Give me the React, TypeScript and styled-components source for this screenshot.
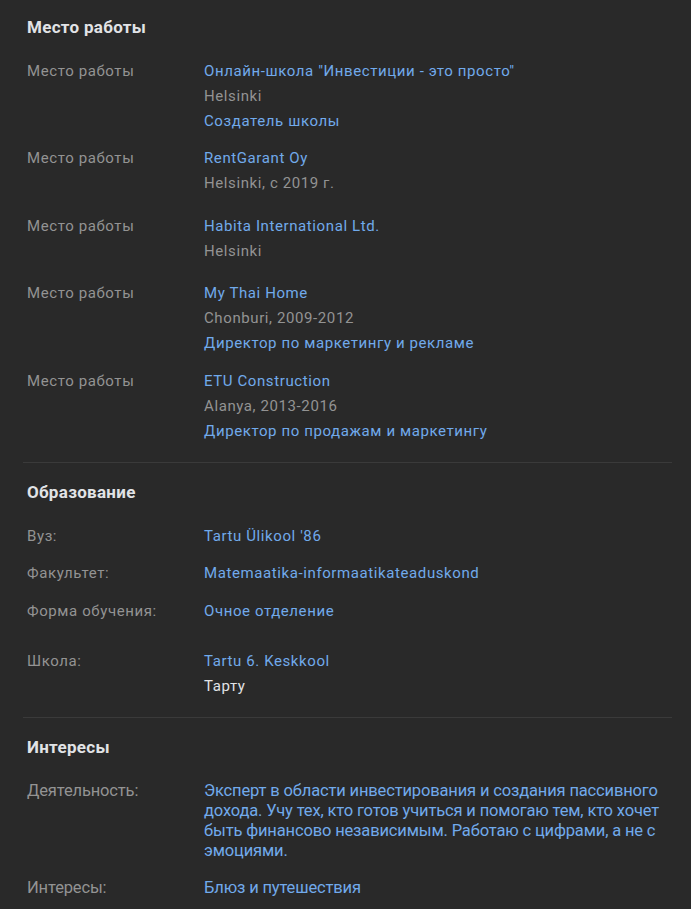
import React from "react";
import styled, { createGlobalStyle } from "styled-components";

const Global = createGlobalStyle`
  html, body { margin: 0; padding: 0; background: #292929; }
  body { font-family: Roboto, "Noto Sans", Arial, sans-serif; -webkit-font-smoothing: antialiased; }
`;

const Page = styled.div`
  background: #292929;
  padding: 0 19px 0 23px;
  min-height: 909px;
  box-sizing: border-box;
`;

const Section = styled.section<{ $top: number; $bottom: number }>`
  padding: ${(p) => p.$top}px 0 ${(p) => p.$bottom}px 4px;
  & + & { border-top: 1px solid #3a3a3a; }
`;

const Heading = styled.h2<{ $gap: number }>`
  margin: 0 0 ${(p) => p.$gap}px;
  font-size: 17px;
  line-height: 20px;
  font-weight: 700;
  color: #e1e3e6;
  letter-spacing: 0.3px;
`;

const Row = styled.div<{ $mb: number; $lh: number; $condensed?: boolean }>`
  display: grid;
  grid-template-columns: 177px 1fr;
  margin-bottom: ${(p) => p.$mb}px;
  font-size: ${(p) => (p.$condensed ? "16.5px" : "15px")};
  line-height: ${(p) => p.$lh}px;
  letter-spacing: ${(p) => (p.$condensed ? "-0.15px" : "0.6px")};
  &:last-child { margin-bottom: 0; }
`;

const Label = styled.div`
  color: #939393;
`;

const Values = styled.div`
  display: flex;
  flex-direction: column;
`;

const Link = styled.a`
  color: #71aaeb;
  text-decoration: none;
`;

const Plain = styled.span<{ $light?: boolean }>`
  color: ${(p) => (p.$light ? "#e1e3e6" : "#939393")};
`;

type Item = { link: string; sub?: string; sub2?: string };

const jobs: { item: Item; mb: number }[] = [
  { item: { link: 'Онлайн-школа "Инвестиции - это просто"', sub: "Helsinki", sub2: "Создатель школы" }, mb: 12 },
  { item: { link: "RentGarant Oy", sub: "Helsinki, с 2019 г." }, mb: 18 },
  { item: { link: "Habita International Ltd.", sub: "Helsinki" }, mb: 17 },
  { item: { link: "My Thai Home", sub: "Chonburi, 2009-2012", sub2: "Директор по маркетингу и рекламе" }, mb: 13 },
  { item: { link: "ETU Construction", sub: "Alanya, 2013-2016", sub2: "Директор по продажам и маркетингу" }, mb: 0 },
];

export default function App() {
  return (
    <>
      <Global />
      <Page>
        <Section $top={17} $bottom={18}>
          <Heading $gap={22}>Место работы</Heading>
          {jobs.map((j, i) => (
            <Row key={i} $mb={j.mb} $lh={25}>
              <Label>Место работы</Label>
              <Values>
                <Link href="#">{j.item.link}</Link>
                {j.item.sub && <Plain>{j.item.sub}</Plain>}
                {j.item.sub2 && <Link href="#">{j.item.sub2}</Link>}
              </Values>
            </Row>
          ))}
        </Section>
        <Section $top={19} $bottom={18}>
          <Heading $gap={22}>Образование</Heading>
          <Row $mb={12} $lh={25}>
            <Label>Вуз:</Label>
            <Values><Link href="#">Tartu Ülikool '86</Link></Values>
          </Row>
          <Row $mb={13} $lh={25}>
            <Label>Факультет:</Label>
            <Values><Link href="#">Matemaatika-informaatikateaduskond</Link></Values>
          </Row>
          <Row $mb={25} $lh={25}>
            <Label>Форма обучения:</Label>
            <Values><Link href="#">Очное отделение</Link></Values>
          </Row>
          <Row $mb={0} $lh={25}>
            <Label>Школа:</Label>
            <Values>
              <Link href="#">Tartu 6. Keskkool</Link>
              <Plain $light>Тарту</Plain>
            </Values>
          </Row>
        </Section>
        <Section $top={19} $bottom={12}>
          <Heading $gap={24}>Интересы</Heading>
          <Row $mb={17} $lh={20} $condensed>
            <Label>Деятельность:</Label>
            <Values>
              <Link href="#">
                Эксперт в области инвестирования и создания пассивного дохода. Учу тех, кто готов учиться и помогаю тем, кто хочет быть финансово независимым. Работаю с цифрами, а не с эмоциями.
              </Link>
            </Values>
          </Row>
          <Row $mb={0} $lh={20} $condensed>
            <Label>Интересы:</Label>
            <Values><Link href="#">Блюз и путешествия</Link></Values>
          </Row>
        </Section>
      </Page>
    </>
  );
}
